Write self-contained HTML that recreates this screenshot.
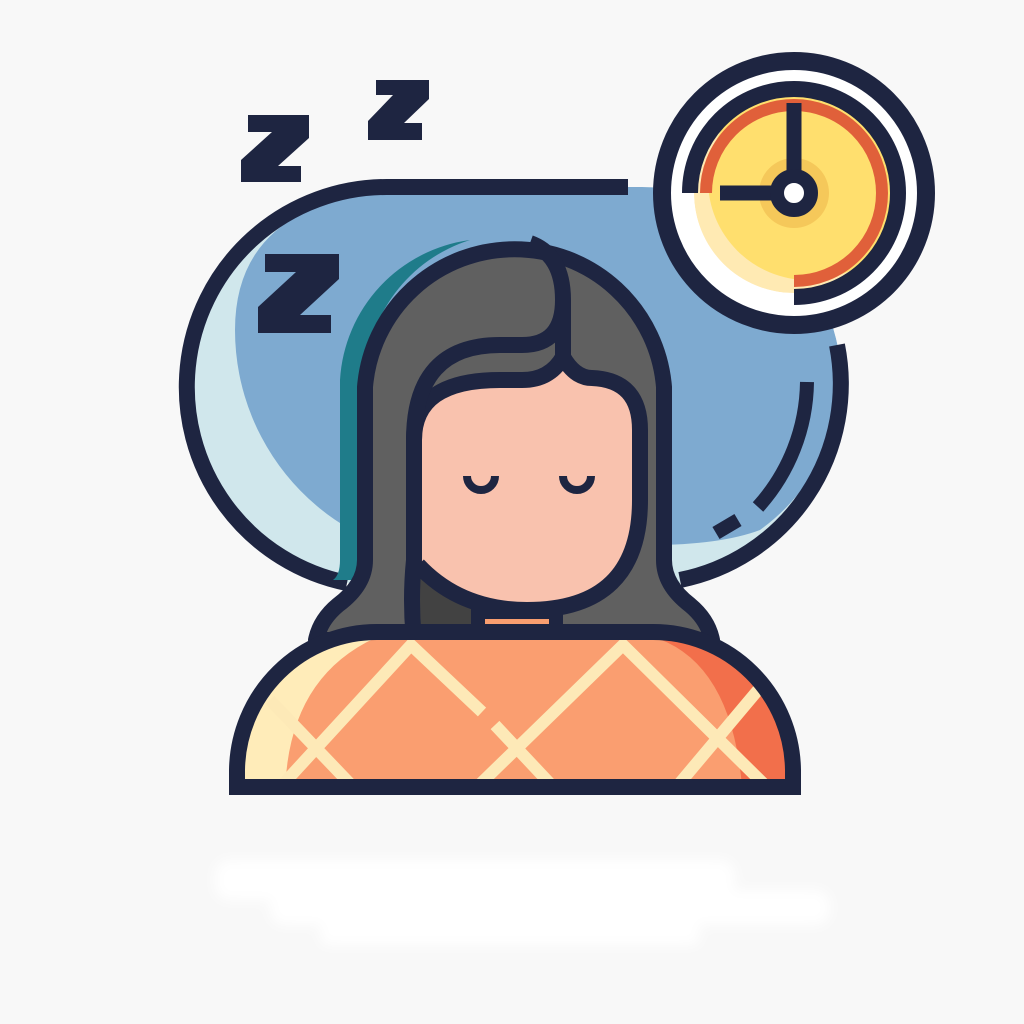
<!DOCTYPE html>
<html><head><meta charset="utf-8"><style>html,body{margin:0;padding:0;background:#f8f8f8;width:1024px;height:1024px;overflow:hidden}</style></head>
<body>
<svg width="1024" height="1024" viewBox="0 0 1024 1024" xmlns="http://www.w3.org/2000/svg">
<defs>
<clipPath id="pil"><path d="M387 187 H642 A200 200 0 0 1 642 587 H387 A200 200 0 0 1 387 187 Z"/></clipPath>
<clipPath id="bl"><path d="M237 787 V770 A140 140 0 0 1 377 632 H653 A140 140 0 0 1 793 770 V787 Z"/></clipPath>
<clipPath id="cf"><circle cx="794" cy="193" r="100"/></clipPath>
<filter id="bf"><feGaussianBlur stdDeviation="6"/></filter>
</defs>
<g filter="url(#bf)" fill="#fff">
<rect x="215" y="860" width="520" height="40" rx="15"/>
<rect x="270" y="890" width="560" height="35" rx="15"/>
<rect x="320" y="920" width="380" height="25" rx="10"/>
</g>
<!-- pillow -->
<g clip-path="url(#pil)">
<rect x="180" y="180" width="680" height="420" fill="#d0e7ec"/>
<path d="M440 187 H642 A200 200 0 0 1 842 387 A200 200 0 0 1 760 530 Q720 545 650 545 L460 560 A230 230 0 0 1 235 330 Q235 187 440 187 Z" fill="#7eaad0"/>
</g>
<path d="M628 187 H387 A200 200 0 0 0 347 583" fill="none" stroke="#1e2541" stroke-width="16"/>
<path d="M837 345 A200 200 0 0 1 680 580" fill="none" stroke="#1e2541" stroke-width="16"/>
<path d="M807 382 A190 190 0 0 1 758 507" fill="none" stroke="#1e2541" stroke-width="14"/>
<path d="M738 520 L716 533" fill="none" stroke="#1e2541" stroke-width="14"/>
<!-- Zs -->
<g fill="#1e2541">
<polygon points="376,80 429,80 429,99 404,123 422,123 422,140 368,140 368,121 393,95 376,95"/>
<polygon points="248,115 309,115 309,138 278,166 301,166 301,182 241,182 241,160 272,132 248,132"/>
<polygon points="265,254 339,254 339,279 300,315 331,315 331,333 258,333 258,307 296,272 265,272"/>
</g>
<!-- teal shadow -->
<path d="M365 580 V380 A150 150 0 0 1 470 240 A150 150 0 0 0 340 380 V560 Q340 575 333 580 Z" fill="#1f7c8a"/>
<!-- hair -->
<path d="M365 560 V387 A150 150 0 0 1 664 387 V560 Q664 585 690 605 Q708 620 712 640 H316 Q320 620 338 605 Q365 585 365 560 Z" fill="#606060" stroke="#1e2541" stroke-width="16" stroke-linejoin="round"/>
<path d="M420 570 L418 640 H480 V610 Q440 595 420 570 Z" fill="#424242"/>
<!-- face -->
<path d="M414 640 Q410 600 414 560 V440 Q414 380 500 380 H522 Q550 380 563 357 Q575 378 592 378 Q640 380 640 430 V500 Q640 610 527 610 Q460 610 418 565" fill="#f9c2ae" stroke="#1e2541" stroke-width="16" stroke-linejoin="round"/>
<path d="M414 440 Q414 345 500 345 H522 Q563 345 563 300 Q563 255 530 243" fill="none" stroke="#1e2541" stroke-width="16"/>
<path d="M563 300 V357" fill="none" stroke="#1e2541" stroke-width="16"/>
<rect x="478" y="612" width="78" height="24" fill="#f99e6f" stroke="#1e2541" stroke-width="14"/>
<path d="M467 476 A14 14 0 0 0 495 476 M563 476 A14 14 0 0 0 591 476" fill="none" stroke="#1e2541" stroke-width="8"/>
<!-- blanket -->
<g clip-path="url(#bl)">
<rect x="230" y="625" width="570" height="170" fill="#fa9e70"/>
<path d="M230 800 V700 Q260 650 375 638 Q285 680 285 800 Z" fill="#ffecb9"/>
<path d="M650 636 Q735 660 743 800 H800 V632 Z" fill="#f26f4b"/>
<g stroke="#fde9b7" stroke-width="12" fill="none" stroke-linecap="butt">
<path d="M230 842 L411 645 L482 712"/>
<path d="M270 700 L356 790"/>
<path d="M495 725 L556 790"/>
<path d="M474 790 L623 645 L780 800"/>
<path d="M800 640 L674 790"/>
</g>
</g>
<path d="M237 787 V770 A140 140 0 0 1 377 632 H653 A140 140 0 0 1 793 770 V787 Z" fill="none" stroke="#1e2541" stroke-width="16"/>
<!-- clock -->
<circle cx="794" cy="193" r="132" fill="#fff" stroke="#1e2541" stroke-width="18"/>
<g clip-path="url(#cf)">
<circle cx="794" cy="193" r="100" fill="#ffeab3"/>
<circle cx="808" cy="180" r="100" fill="#ffdf6e"/>
</g>
<circle cx="794" cy="193" r="35" fill="#f5c85a"/>
<path d="M706 193 A88 88 0 1 1 794 281" fill="none" stroke="#e0603a" stroke-width="12"/>
<path d="M690 193 A104 104 0 1 1 794 297" fill="none" stroke="#1e2541" stroke-width="16"/>
<path d="M794 103 V175 M720 193 H776" stroke="#1e2541" stroke-width="15"/>
<circle cx="794" cy="193" r="17" fill="#fff" stroke="#1e2541" stroke-width="14"/>
</svg>
</body></html>
